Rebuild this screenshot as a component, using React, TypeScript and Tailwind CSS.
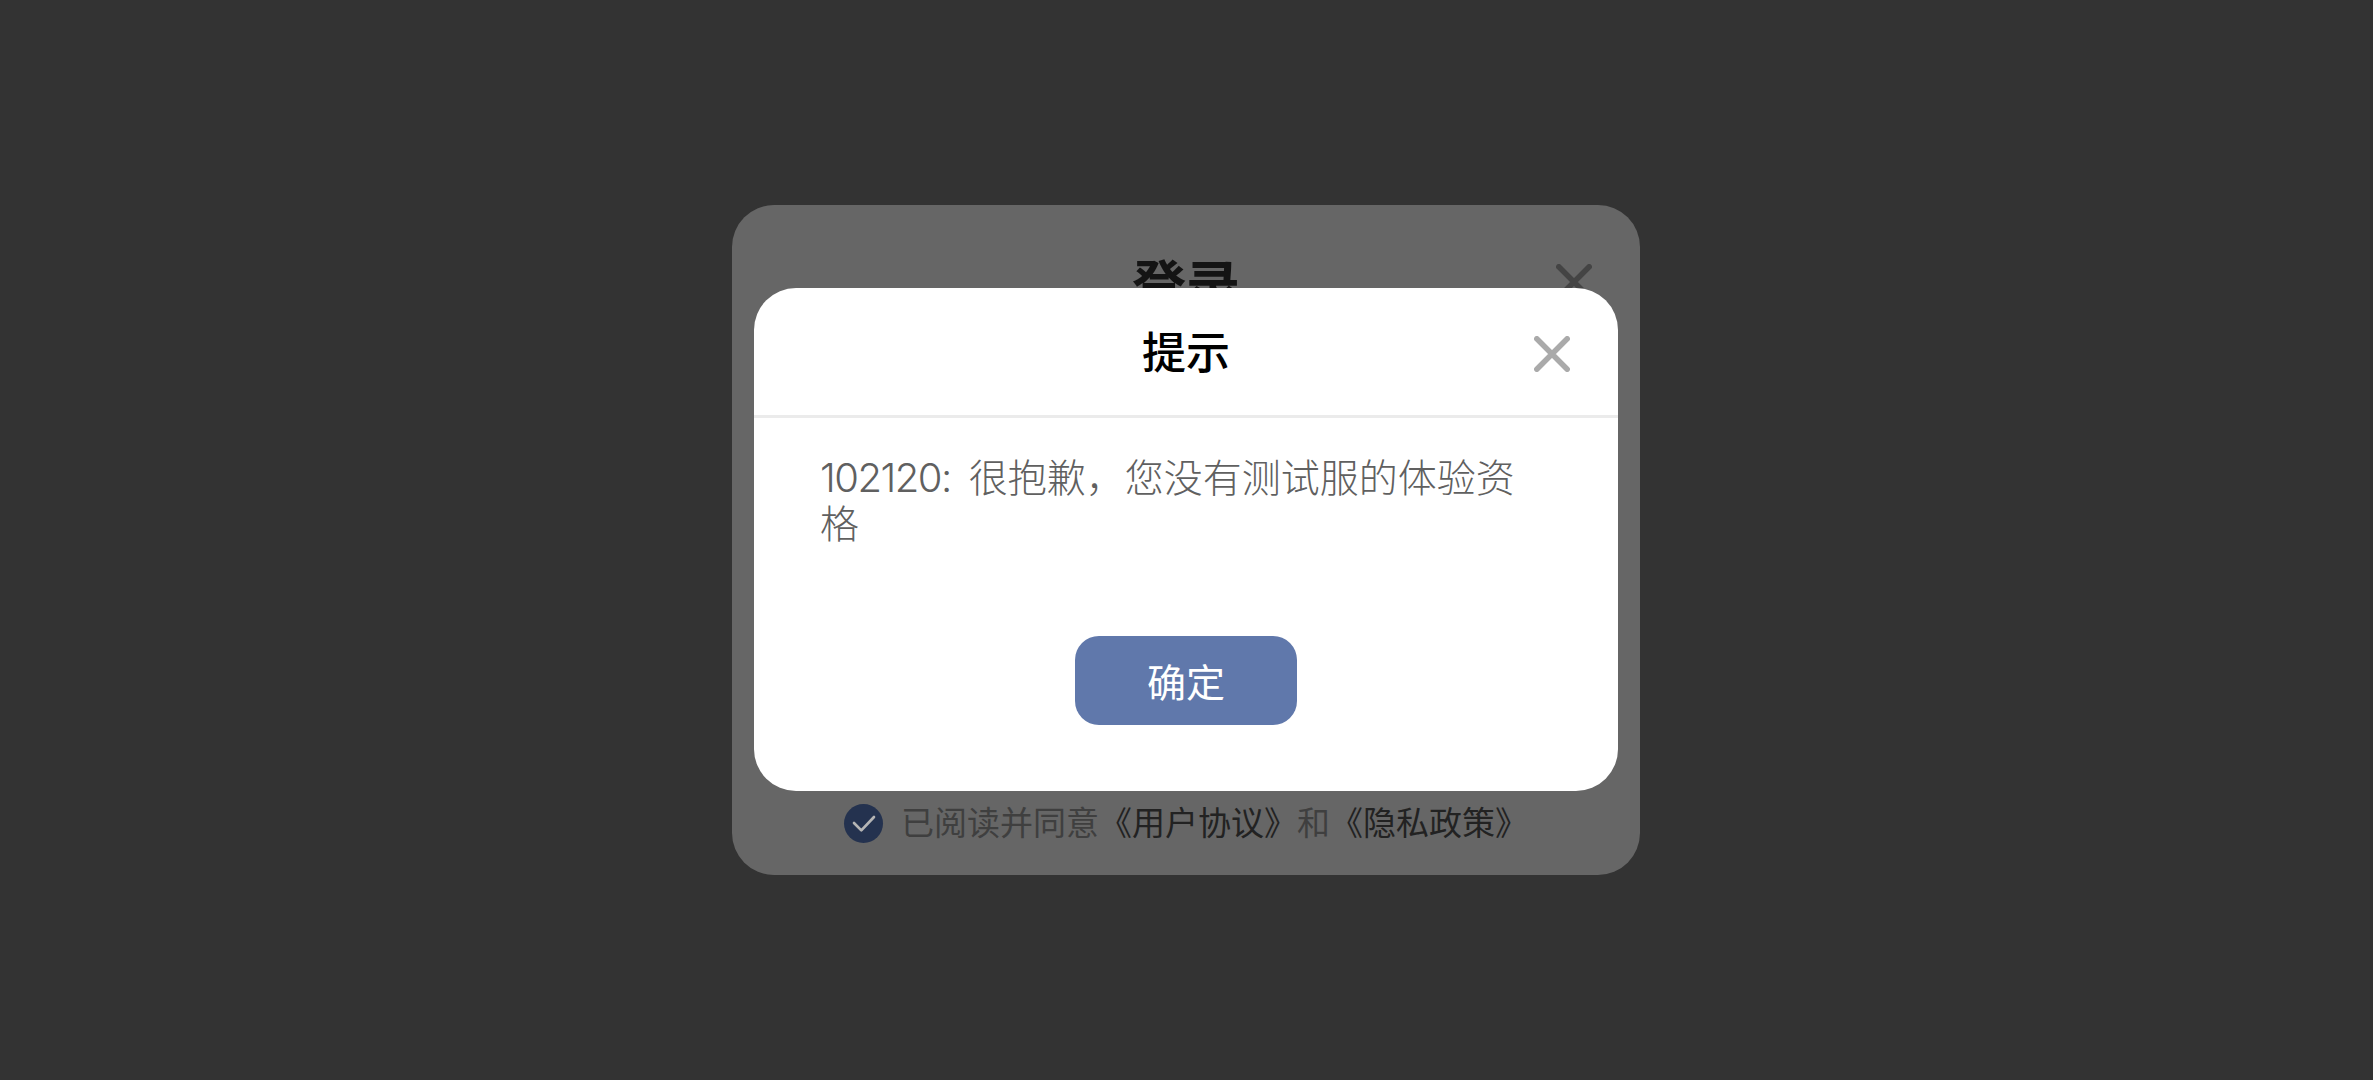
const cjk = "font-['Inter','Noto_Sans_CJK_SC',sans-serif]";

function CloseIcon({ className }: { className: string }) {
  return (
    <svg viewBox="0 0 36 36" fill="none" stroke="currentColor" strokeWidth="5.5" strokeLinecap="round" className={className}>
      <path d="M2.8 2.8 33.2 33.2M33.2 2.8 2.8 33.2" />
    </svg>
  );
}

function NoticeDialog() {
  return (
    <div className="absolute top-[83px] left-[22px] flex h-[503px] w-[864px] flex-col rounded-[42px] bg-white">
      <div className="relative flex h-[130px] items-center justify-center border-b-[3px] border-[#ebebeb] pt-[3px]">
        <h3 className="text-[44px] leading-none font-medium text-black">提示</h3>
        <CloseIcon className="absolute top-[48px] right-[48px] h-9 w-9 text-[#aaaaaa]" />
      </div>
      <p className="pt-[37px] pr-[66px] pl-[66px] text-[39px] leading-[46px] font-light text-[#606060]">
        <span className="mr-[18px] text-[40px] tracking-[-1.5px]">102120:</span>很抱歉，您没有测试服的体验资
        <br />格
      </p>
      <div className="flex flex-1 items-end justify-center pb-[66px]">
        <button type="button" className="h-[89px] w-[222px] rounded-[24px] bg-[#6078ab] pt-[5px] text-[39px] text-white">
          确定
        </button>
      </div>
    </div>
  );
}

function LoginCard() {
  return (
    <div className="relative flex h-[670px] w-[908px] flex-col rounded-[42px] bg-[#666666]">
      <div className="relative flex h-[154px] items-center justify-center pt-[10px]">
        <h2 className="text-[54px] leading-none font-bold text-[#141414]">登录</h2>
        <CloseIcon className="absolute top-[59px] right-[48px] h-9 w-9 text-[#444444]" />
      </div>
      <div className="flex-1" />
      <div className="flex items-center justify-center gap-[18px] pb-[27px] text-[33px] leading-[50px] text-[#3f3f3f]">
        <span className="flex h-[39px] w-[39px] items-center justify-center rounded-full bg-[#24324f]">
          <svg viewBox="0 0 24 24" fill="none" stroke="#b5b5b5" strokeWidth="2" strokeLinecap="round" strokeLinejoin="round" className="h-[32px] w-[32px]">
            <path d="M4.5 12 10 17.5 19.5 7.5" />
          </svg>
        </span>
        <p>
          已阅读并同意<span className="text-[#222222]">《用户协议》</span>和<span className="text-[#222222]">《隐私政策》</span>
        </p>
      </div>
      <NoticeDialog />
    </div>
  );
}

export default function App() {
  return (
    <div className={`flex h-screen w-full items-center justify-center overflow-hidden bg-[#333333] pr-px ${cjk}`}>
      <LoginCard />
    </div>
  );
}
